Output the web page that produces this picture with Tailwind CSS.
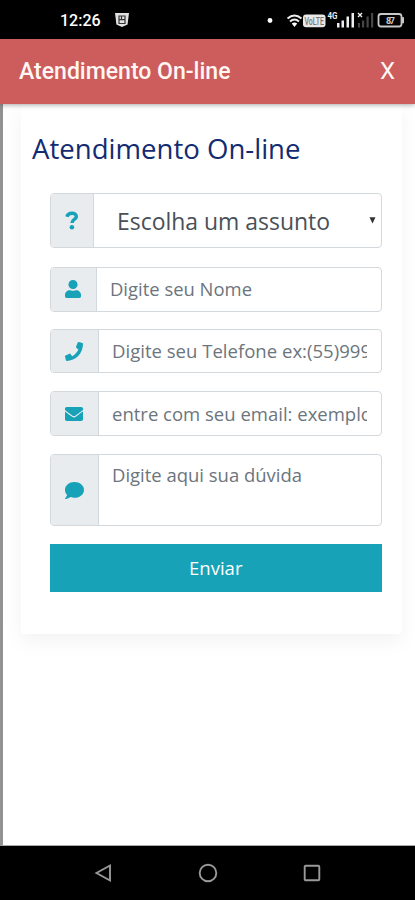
<!DOCTYPE html>
<html lang="pt-BR">
<head>
<meta charset="utf-8">
<title>Atendimento On-line</title>
<script src="https://cdn.jsdelivr.net/npm/@tailwindcss/browser@4"></script>
</head>
<body class="w-[415px] h-[900px] overflow-hidden bg-white flex flex-col font-['Open_Sans',sans-serif]">
<div class="h-[39px] shrink-0 bg-black text-white flex items-center pl-[60px] pr-2 font-[Roboto,sans-serif]">
  <span class="w-[54px] text-[16px] leading-5 font-medium pt-0.5 whitespace-nowrap">12:26</span>
  <svg class="w-4 h-4" viewBox="0 0 16 16"><path d="M1 1h14l-1.400 11.500L8 15l-5.600-2.500z" fill="#e0e0e0"/><path d="M5 4h6v7.500H5zM5 7.600h6M7.500 4v3" fill="none" stroke="#333" stroke-width="1.200"/></svg>
  <svg class="ml-auto w-[142px] h-[20px]" viewBox="0 0 142 20">
    <circle cx="5" cy="10.500" r="2.400" fill="#fff"/>
    <path d="M22.500 8.500Q29.500 2.500 36.500 8.500M25 11.500Q29.500 7.500 34 11.500" fill="none" stroke="#eee" stroke-width="1.900"/>
    <path d="M26.800 13.500Q29.500 11.500 32.200 13.500L29.500 17z" fill="#fff"/>
    <rect x="38" y="4.500" width="22.500" height="12.800" rx="3" fill="#e8e8e8"/>
    <text x="39.500" y="14.600" font-family="Roboto" font-size="10" font-weight="500" fill="#777" textLength="19.500" lengthAdjust="spacingAndGlyphs">VoLTE</text>
    <text x="62.500" y="8.500" font-family="Roboto" font-size="8.500" font-weight="700" fill="#eee" textLength="10" lengthAdjust="spacingAndGlyphs">4G</text>
    <path d="M72 13h2.500v4.500H72zM76.500 10.500H79v7h-2.500zM81.500 6.500H84v11h-2.500zM86.500 3H89v14.500h-2.500z" fill="#eee"/>
    <path d="M93 13h2v4.500h-2zM97 10.500h2.200v7H97zM101.500 6.500h2.200v11h-2.200zM106 3h2.200v14.500H106z" fill="#464646"/>
    <path d="M93 3l4 4M97 3l-4 4" stroke="#eee" stroke-width="1.400"/>
    <rect x="113.500" y="4" width="23" height="12.500" rx="2.500" fill="none" stroke="#c8c8c8" stroke-width="1.800"/>
    <path d="M137.500 7.500h1v5.500h-1z" fill="#c8c8c8" stroke="#c8c8c8"/>
    <text x="121" y="13.500" font-family="Roboto" font-size="9" font-weight="700" fill="#ccc" textLength="9">87</text>
  </svg>
</div>
<header class="relative z-10 h-[65px] shrink-0 bg-[#cd5c5c] text-white flex items-center justify-between pl-[19px] pr-5 font-[Roboto,sans-serif] shadow-[0_1px_5px_rgba(0,0,0,0.35)]">
  <h1 class="text-[23px] font-medium leading-7 whitespace-nowrap"><svg class="block w-[214px] h-7 overflow-visible"><text x="0" y="21" fill="#fff7f3" textLength="211.500" lengthAdjust="spacingAndGlyphs">Atendimento On-line</text></svg></h1>
  <span class="text-[24px] leading-7 text-[#fff7f3] -mt-0.5">X</span>
</header>
<main class="h-[742px] shrink-0 border-l-[3px] border-[#929292] border-b border-b-[#aaa] pl-[18px] pr-[13px] overflow-hidden">
  <section class="h-[530px] rounded-b bg-white pl-[29px] pr-[20px] shadow-[0_8px_20px_rgba(0,0,0,0.05)]">
    <h2 class="-ml-[18px] pt-[25px] h-[89px] text-[#132b70]"><svg class="block w-[270px] h-10 overflow-visible"><text x="0" y="30" font-size="28" fill="currentColor" textLength="268.500" lengthAdjust="spacingAndGlyphs">Atendimento On-line</text></svg></h2>
    <form class="w-[332px] flex flex-col text-[#6c757d]">
      <div class="h-[55px] mb-[18.500px] flex rounded border border-[#d3d8dc] overflow-hidden">
        <div class="w-[43px] bg-[#e9ecef] border-r border-[#d3d8dc] flex items-center justify-center">
          <svg class="w-[14px] h-[19px]" viewBox="0 0 14 19"><path d="M1.900 5.700C3.300 1.300 11.500 1.200 11.300 5.600C11.200 8.600 7 8.300 7 12" fill="none" stroke="#17a2b8" stroke-width="3.500"/><circle cx="6.900" cy="16.200" r="2.300" fill="#17a2b8"/></svg>
        </div>
        <div class="flex-1 flex items-center justify-between pl-[23px] pr-1 text-[#495057]">
          <svg class="w-[214px] h-9 overflow-visible"><text x="0" y="27" font-size="24" fill="currentColor" textLength="213" lengthAdjust="spacingAndGlyphs">Escolha um assunto</text></svg>
          <svg class="w-[7px] h-[7px] mr-[1.500px]" viewBox="0 0 7 7"><path d="M.5.2h6l-3 6.200z" fill="#333"/></svg>
        </div>
      </div>
      <div class="h-[45px] mb-[17.500px] flex rounded border border-[#d3d8dc] overflow-hidden">
        <div class="w-[45.500px] bg-[#e9ecef] border-r border-[#d3d8dc] flex items-center justify-center">
          <svg class="w-4 h-[18px]" viewBox="0 0 448 512" preserveAspectRatio="none"><path fill="#17a2b8" d="M224 256c70.700 0 128-57.300 128-128S294.700 0 224 0 96 57.300 96 128s57.300 128 128 128zm89.600 32h-16.700c-22.200 10.200-46.900 16-72.900 16s-50.600-5.800-72.900-16h-16.700C60.200 288 0 348.200 0 422.400V464c0 26.500 21.500 48 48 48h352c26.500 0 48-21.500 48-48v-41.600c0-74.200-60.200-134.400-134.400-134.400z"/></svg>
        </div>
        <div class="flex-1 flex items-center pl-[13px]"><svg class="w-[143px] h-7 overflow-visible"><text x="0" y="20.500" font-size="19" fill="currentColor" textLength="142" lengthAdjust="spacingAndGlyphs">Digite seu Nome</text></svg></div>
      </div>
      <div class="h-[44px] mb-[18px] flex rounded border border-[#d3d8dc] overflow-hidden">
        <div class="w-[48px] bg-[#e9ecef] border-r border-[#d3d8dc] flex items-center justify-center pr-px">
          <svg class="w-[18px] h-[19px]" viewBox="0 0 512 512" preserveAspectRatio="none"><path fill="#17a2b8" d="M493.400 24.600l-104-24c-11.300-2.600-22.900 3.300-27.500 13.900l-48 112c-4.200 9.800-1.400 21.300 6.900 28l60.600 49.600c-36 76.700-98.900 140.500-177.200 177.200l-49.600-60.600c-6.800-8.300-18.200-11.100-28-6.900l-112 48C3.900 366.500-2 378.100.6 389.400l24 104C27.100 504.200 36.700 512 48 512c256.100 0 464-207.500 464-464 0-11.200-7.700-20.900-18.600-23.400z"/></svg>
        </div>
        <div class="flex-1 flex items-center pl-[13px]"><svg class="w-[255px] h-7 overflow-hidden"><text x="0" y="21" font-size="19" fill="currentColor" textLength="259" lengthAdjust="spacingAndGlyphs">Digite seu Telefone ex:(55)999</text></svg></div>
      </div>
      <div class="h-[45px] mb-[18px] flex rounded border border-[#d3d8dc] overflow-hidden">
        <div class="w-[48px] bg-[#e9ecef] border-r border-[#d3d8dc] flex items-center justify-center pr-px">
          <svg class="w-[18px] h-[14px]" viewBox="0 64 512 384" preserveAspectRatio="none"><path fill="#17a2b8" d="M502.300 190.800c3.900-3.100 9.700-.2 9.700 4.700V400c0 26.500-21.500 48-48 48H48c-26.500 0-48-21.500-48-48V195.600c0-5 5.700-7.800 9.700-4.700 22.400 17.400 52.100 39.500 154.100 113.600 21.100 15.400 56.700 47.800 92.200 47.600 35.700.3 72-32.800 92.300-47.600 102-74.100 131.600-96.300 154-113.700zM256 320c23.200.4 56.600-29.200 73.400-41.400 132.700-96.300 142.800-104.700 173.400-128.700 5.800-4.500 9.200-11.500 9.200-18.900v-19c0-26.500-21.500-48-48-48H48c-26.500 0-48 21.500-48 48v19c0 7.400 3.400 14.300 9.200 18.900 30.600 23.900 40.700 32.400 173.400 128.700 16.800 12.200 50.200 41.800 73.400 41.400z"/></svg>
        </div>
        <div class="flex-1 flex items-center pl-[13px]"><svg class="w-[255px] h-7 overflow-hidden"><text x="0" y="20.500" font-size="19" fill="currentColor" textLength="260" lengthAdjust="spacingAndGlyphs">entre com seu email: exemplo</text></svg></div>
      </div>
      <div class="h-[72px] mb-[18px] flex rounded border border-[#d3d8dc] overflow-hidden">
        <div class="w-[48px] bg-[#e9ecef] border-r border-[#d3d8dc] flex items-center justify-center pr-px">
          <svg class="w-[19px] h-[17px]" viewBox="0 32 512 448" preserveAspectRatio="none"><path fill="#17a2b8" d="M256 32C114.600 32 0 125.100 0 240c0 49.600 21.400 95 57 130.700C44.500 421.100 2.700 466 2.200 466.500c-2.200 2.300-2.800 5.700-1.500 8.700S4.800 480 8 480c66.300 0 116-31.800 140.600-51.400 32.700 12.300 69 19.400 107.400 19.400 141.400 0 256-93.100 256-208S397.400 32 256 32z"/></svg>
        </div>
        <div class="flex-1 pl-[13px] pt-[7px]"><svg class="w-[191px] h-7 overflow-visible"><text x="0" y="20" font-size="19" fill="currentColor" textLength="190" lengthAdjust="spacingAndGlyphs">Digite aqui sua dúvida</text></svg></div>
      </div>
      <button type="button" class="h-[48px] bg-[#17a2b8] text-white flex items-center justify-center"><svg class="w-[54px] h-7 overflow-visible"><text x="0" y="20.500" font-size="18.500" fill="currentColor" textLength="53.500" lengthAdjust="spacingAndGlyphs">Enviar</text></svg></button>
    </form>
  </section>
</main>
<nav class="flex-1 bg-black flex items-center justify-between pl-[94px] pr-[94px]">
  <svg class="w-[18px] h-[20px]" viewBox="0 0 18 20"><path d="M16 2.500v15L2.500 10z" fill="none" stroke="#999" stroke-width="1.900"/></svg>
  <svg class="w-5 h-5" viewBox="0 0 20 20"><circle cx="10" cy="10" r="8.300" fill="none" stroke="#999" stroke-width="1.900"/></svg>
  <svg class="w-[18px] h-[18px]" viewBox="0 0 18 18"><rect x="1.700" y="1.700" width="14.600" height="14.600" rx="1" fill="none" stroke="#999" stroke-width="1.900"/></svg>
</nav>
</body>
</html>
